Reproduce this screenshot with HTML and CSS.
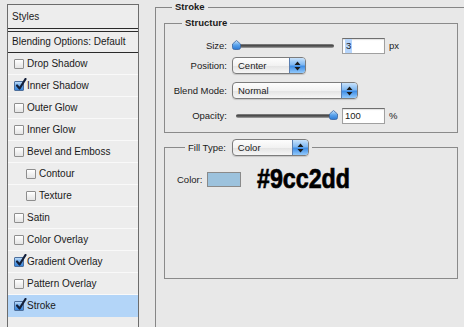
FILE: index.html
```html
<!DOCTYPE html>
<html lang="en">
<head>
  <meta charset="UTF-8">
  <title>Layer Style - Stroke</title>
  <link rel="stylesheet" href="styles.css">
</head>
<body>
  <div class="dialog">
    <aside class="styles-panel">
      <div class="panel-title">Styles</div>
      <div class="panel-blending">Blending Options: Default</div>
      <ul class="style-list">
        <li class="style-item"><span class="check"></span>Drop Shadow</li>
        <li class="style-item"><span class="check is-on"><svg class="tick" width="12" height="13" viewBox="0 0 12 13"><path d="M2 7.5 L4.6 10.5 L10.5 1" fill="none" stroke="#14203a" stroke-width="2.2" stroke-linecap="round" stroke-linejoin="round"/></svg></span>Inner Shadow</li>
        <li class="style-item"><span class="check"></span>Outer Glow</li>
        <li class="style-item"><span class="check"></span>Inner Glow</li>
        <li class="style-item"><span class="check"></span>Bevel and Emboss</li>
        <li class="style-item sub"><span class="check"></span>Contour</li>
        <li class="style-item sub"><span class="check"></span>Texture</li>
        <li class="style-item"><span class="check"></span>Satin</li>
        <li class="style-item"><span class="check"></span>Color Overlay</li>
        <li class="style-item"><span class="check is-on"><svg class="tick" width="12" height="13" viewBox="0 0 12 13"><path d="M2 7.5 L4.6 10.5 L10.5 1" fill="none" stroke="#14203a" stroke-width="2.2" stroke-linecap="round" stroke-linejoin="round"/></svg></span>Gradient Overlay</li>
        <li class="style-item"><span class="check"></span>Pattern Overlay</li>
        <li class="style-item selected"><span class="check is-on"><svg class="tick" width="12" height="13" viewBox="0 0 12 13"><path d="M2 7.5 L4.6 10.5 L10.5 1" fill="none" stroke="#14203a" stroke-width="2.2" stroke-linecap="round" stroke-linejoin="round"/></svg></span>Stroke</li>
      </ul>
    </aside>

    <section class="settings">
      <fieldset class="group-stroke">
        <legend>Stroke</legend>

        <fieldset class="group-structure">
          <legend>Structure</legend>

          <div class="field">
            <span class="field-label">Size:</span>
            <div class="field-control">
              <div class="slider">
                <div class="track"></div>
                <svg class="thumb thumb-start" width="9" height="10" viewBox="0 0 9 10"><defs><linearGradient id="tg1" x1="0" y1="0" x2="0" y2="1"><stop offset="0" stop-color="#cfe6fc"/><stop offset="0.5" stop-color="#5aa3ec"/><stop offset="1" stop-color="#2a78d4"/></linearGradient></defs><path d="M4.5 0.5 L8.5 4 V7.5 Q8.5 9.5 6.5 9.5 H2.5 Q0.5 9.5 0.5 7.5 V4 Z" fill="url(#tg1)" stroke="#3a64a0" stroke-width="0.8"/></svg>
              </div>
              <span class="num-field"><span class="num-sel">3</span></span>
              <span class="unit">px</span>
            </div>
          </div>

          <div class="field field-tight">
            <span class="field-label">Position:</span>
            <div class="field-control">
              <div class="popup popup-position">
                <span class="popup-text">Center</span>
                <span class="popup-arrows"><svg width="7" height="10" viewBox="0 0 7 10"><path d="M3.5 0.5 L6.5 4 H0.5 Z M0.5 6 H6.5 L3.5 9.5 Z" fill="#1b1b1b"/></svg></span>
              </div>
            </div>
          </div>

          <div class="field">
            <span class="field-label">Blend Mode:</span>
            <div class="field-control">
              <div class="popup popup-blend">
                <span class="popup-text">Normal</span>
                <span class="popup-arrows"><svg width="7" height="10" viewBox="0 0 7 10"><path d="M3.5 0.5 L6.5 4 H0.5 Z M0.5 6 H6.5 L3.5 9.5 Z" fill="#1b1b1b"/></svg></span>
              </div>
            </div>
          </div>

          <div class="field">
            <span class="field-label">Opacity:</span>
            <div class="field-control">
              <div class="slider">
                <div class="track"></div>
                <svg class="thumb thumb-end" width="9" height="10" viewBox="0 0 9 10"><defs><linearGradient id="tg2" x1="0" y1="0" x2="0" y2="1"><stop offset="0" stop-color="#cfe6fc"/><stop offset="0.5" stop-color="#5aa3ec"/><stop offset="1" stop-color="#2a78d4"/></linearGradient></defs><path d="M4.5 0.5 L8.5 4 V7.5 Q8.5 9.5 6.5 9.5 H2.5 Q0.5 9.5 0.5 7.5 V4 Z" fill="url(#tg2)" stroke="#3a64a0" stroke-width="0.8"/></svg>
              </div>
              <span class="num-field">100</span>
              <span class="unit">%</span>
            </div>
          </div>
        </fieldset>

        <fieldset class="group-fill">
          <legend>
            <span class="fill-label">Fill Type:</span>
            <span class="popup popup-fill">
              <span class="popup-text">Color</span>
              <span class="popup-arrows"><svg width="7" height="10" viewBox="0 0 7 10"><path d="M3.5 0.5 L6.5 4 H0.5 Z M0.5 6 H6.5 L3.5 9.5 Z" fill="#1b1b1b"/></svg></span>
            </span>
          </legend>

          <div class="color-row">
            <span class="color-label">Color:</span>
            <span class="swatch"></span>
            <span class="hex">#9cc2dd</span>
          </div>
        </fieldset>
      </fieldset>
    </section>
  </div>
</body>
</html>
```

FILE: styles.css
```css
* {
  box-sizing: border-box;
}

html,
body {
  margin: 0;
  padding: 0;
}

body {
  background: #e8e8e8;
  color: #1a1a1a;
  font-family: 'Liberation Sans', Arial, sans-serif;
  height: 327px;
  overflow: hidden;
}

.dialog {
  display: flex;
  align-items: flex-start;
}

/* left list of styles */

.styles-panel {
  flex-shrink: 0;
  width: 132px;
  height: 323px;
  margin: 4px 0 0 7px;
  border: 1px solid #6c6c6c;
  border-bottom: 0;
  background: #ededed;
  font-size: 10px;
}

.panel-title {
  height: 27px;
  line-height: 23px;
  padding-left: 4px;
  border-bottom: 4px double #2a2a2a;
}

.panel-blending {
  height: 21px;
  line-height: 20px;
  padding-left: 4px;
  border-bottom: 1px solid #2a2a2a;
}

.style-list {
  list-style: none;
  margin: 0;
  padding: 0;
}

.style-item {
  display: flex;
  align-items: center;
  gap: 3px;
  height: 22px;
  padding-left: 6px;
  border-bottom: 1px solid #f9f9f9;
}

.style-item.sub {
  padding-left: 18px;
}

.style-item.selected {
  background: #b3d5f8;
  border-bottom-color: #b3d5f8;
}

.check {
  position: relative;
  width: 10px;
  height: 10px;
  border: 1px solid #8e8e8e;
  border-radius: 1px;
  background: linear-gradient(#ffffff, #e4e4e4);
}

.check.is-on {
  border-color: #4d6f9c;
  background: linear-gradient(#bcdcfb, #5b9fe6 55%, #3a86dc);
}

.check .tick {
  position: absolute;
  left: 0;
  top: -4px;
}

/* right settings */

.settings {
  flex: 1;
  margin-left: 16px;
  font-size: 9.5px;
}

.group-stroke {
  height: 326px;
  margin: 1px 0 0;
  padding: 4px 6px 0 8px;
  border: 0;
  border-top: 1px solid #868686;
  border-left: 1px solid #868686;
}

.group-stroke > legend {
  margin-left: 8px;
  padding: 0 3px;
  font-weight: bold;
  line-height: 12px;
}

.group-structure {
  margin: 0;
  padding: 8px 0 8px 0;
  border: 1px solid #8a8a8a;
}

.group-structure > legend {
  margin-left: 17px;
  padding: 0 3px;
  font-weight: bold;
  line-height: 12px;
}

.field {
  display: grid;
  grid-template-columns: 62px auto;
  column-gap: 5px;
  align-items: center;
  height: 17px;
  margin-top: 8px;
}

.field:first-of-type {
  margin-top: 0;
}

.field-tight {
  margin-top: 3px;
}

.field-label {
  text-align: right;
}

.field-control {
  display: flex;
  align-items: center;
}

.slider {
  position: relative;
  display: flex;
  align-items: center;
  width: 103px;
  height: 17px;
}

.track {
  flex: 1;
  height: 4px;
  margin: 1px 1px 0 4px;
  border-radius: 2px;
  background: linear-gradient(#8a8a8a, #3f3f3f 45%, #a9a9a9);
}

.thumb {
  position: absolute;
  top: 3px;
}

.thumb-start {
  left: 0;
}

.thumb-end {
  right: -3px;
}

.num-field {
  width: 43px;
  height: 16px;
  margin-left: 7px;
  padding-left: 2px;
  line-height: 14px;
  border: 1px solid #a0a0a0;
  border-top-color: #6e6e6e;
  background: #fff;
  box-shadow: inset 0 1px 1px rgba(0, 0, 0, 0.12);
}

.num-sel {
  display: inline-block;
  padding: 0 1px;
  background: #b6d5fb;
}

.unit {
  margin-left: 4px;
}

.popup {
  display: flex;
  height: 17px;
  border: 1px solid #7c7c7c;
  border-radius: 4px;
  overflow: hidden;
  background: linear-gradient(#fdfdfd, #f2f2f2 50%, #e3e3e3 52%, #f6f6f6);
  box-shadow: 0 1px 1px rgba(0, 0, 0, 0.15);
  font-weight: normal;
}

.popup-text {
  flex: 1;
  padding-left: 5px;
  line-height: 15px;
}

.popup-arrows {
  display: flex;
  align-items: center;
  justify-content: center;
  width: 16px;
  border-left: 1px solid #5a7eb0;
  background: linear-gradient(#c8e2fb, #7fb8f2 45%, #3f8de5 55%, #92c9fb);
}

.popup-position {
  width: 74px;
}

.popup-blend {
  width: 126px;
}

.popup-fill {
  width: 77px;
  margin-left: 6px;
}

.group-fill {
  height: 140px;
  margin: 6px 0 0;
  padding: 11px 0 0 12px;
  border: 1px solid #8a8a8a;
}

.group-fill > legend {
  display: flex;
  align-items: center;
  margin-left: 8px;
  padding: 0 3px;
}

.color-row {
  display: flex;
  align-items: center;
  height: 24px;
}

.swatch {
  width: 34px;
  height: 15px;
  margin-left: 5px;
  border: 1px solid #8a8a8a;
  background: #9cc2dd;
}

.hex {
  display: inline-block;
  margin-left: 16px;
  font-size: 28px;
  font-weight: bold;
  line-height: 24px;
  color: #000;
  -webkit-text-stroke: 0.7px #000;
  transform: scaleX(0.83);
  transform-origin: left center;
}
```
